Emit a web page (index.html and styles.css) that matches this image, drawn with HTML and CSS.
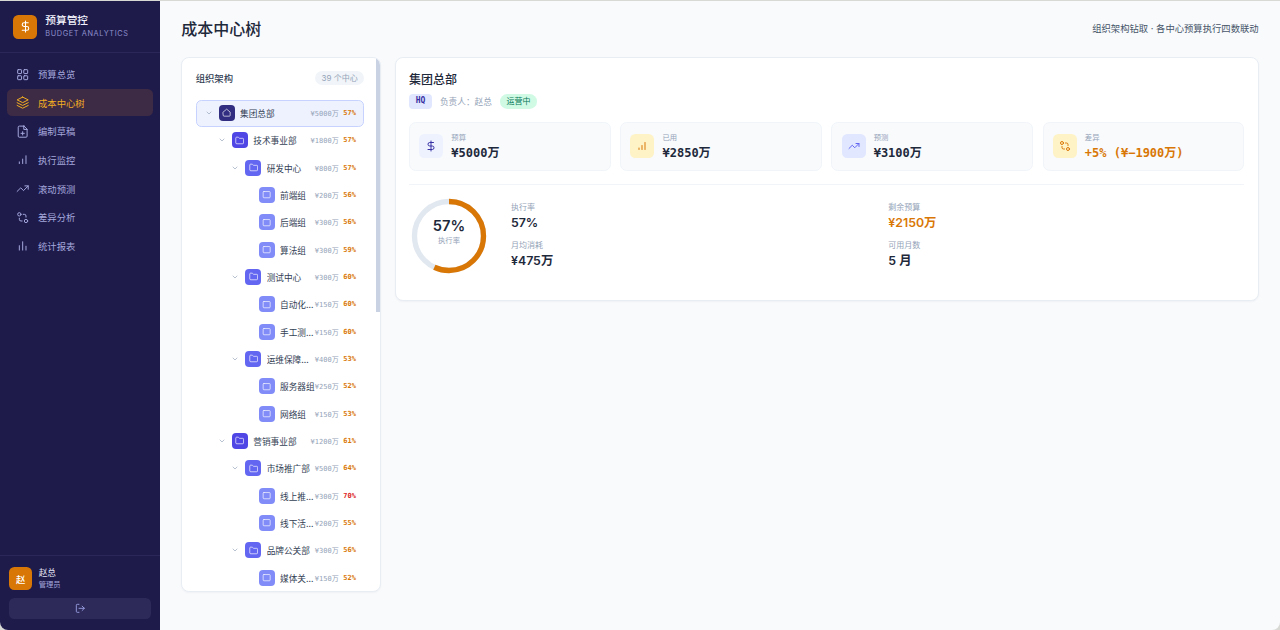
FILE: index.html
```html
<!DOCTYPE html>
<html lang="zh-CN">
<head>
  <meta charset="UTF-8">
  <title>预算管控 - 成本中心树</title>
  <link rel="stylesheet" href="styles.css">
</head>

<body>
  <svg class="icon-defs" aria-hidden="true">
    <symbol id="i-dollar" viewBox="0 0 24 24"><path d="M12 2v20M17 5H9.5a3.5 3.5 0 0 0 0 7h5a3.5 3.5 0 0 1 0 7H6"/></symbol>
    <symbol id="i-grid" viewBox="0 0 24 24"><rect x="3" y="3" width="7" height="7" rx="1"/><rect x="14" y="3" width="7" height="7" rx="1"/><rect x="14" y="14" width="7" height="7" rx="1"/><rect x="3" y="14" width="7" height="7" rx="1"/></symbol>
    <symbol id="i-layers" viewBox="0 0 24 24"><path d="M12 2 2 7l10 5 10-5-10-5z"/><path d="m2 17 10 5 10-5"/><path d="m2 12 10 5 10-5"/></symbol>
    <symbol id="i-file" viewBox="0 0 24 24"><path d="M14.5 2H6a2 2 0 0 0-2 2v16a2 2 0 0 0 2 2h12a2 2 0 0 0 2-2V7.5L14.5 2z"/><path d="M14 2v6h6M12 18v-6M9 15h6"/></symbol>
    <symbol id="i-signal" viewBox="0 0 24 24"><path d="M18 19V5M12 19v-8M6 19v-3"/></symbol>
    <symbol id="i-trend" viewBox="0 0 24 24"><path d="m22 7-8.500 8.500-5-5L2 17"/><path d="M16 7h6v6"/></symbol>
    <symbol id="i-compare" viewBox="0 0 24 24"><circle cx="18" cy="18" r="3"/><circle cx="6" cy="6" r="3"/><path d="M13 6h2a3 3 0 0 1 3 3v2M11 18H9a3 3 0 0 1-3-3v-2"/></symbol>
    <symbol id="i-bars" viewBox="0 0 24 24"><path d="M18 20v-7M12 20V5M6 20v-8"/></symbol>
    <symbol id="i-logout" viewBox="0 0 24 24"><path d="M9 21H5a2 2 0 0 1-2-2V5a2 2 0 0 1 2-2h4M16 17l5-5-5-5M21 12H9"/></symbol>
    <symbol id="i-chevron" viewBox="0 0 24 24"><path d="m6 9 6 6 6-6"/></symbol>
    <symbol id="i-home" viewBox="0 0 24 24"><path d="M3 10.500 12 3l9 7.500V19a2 2 0 0 1-2 2H5a2 2 0 0 1-2-2z"/></symbol>
    <symbol id="i-folder" viewBox="0 0 24 24"><path d="M20 20a2 2 0 0 0 2-2V8a2 2 0 0 0-2-2h-7.900a2 2 0 0 1-1.700-.9l-.8-1.200A2 2 0 0 0 7.900 3H4a2 2 0 0 0-2 2v13a2 2 0 0 0 2 2z"/></symbol>
    <symbol id="i-square" viewBox="0 0 24 24"><rect x="3" y="4" width="18" height="16" rx="2"/></symbol>
  </svg>

  <div class="app">
    <aside class="sidebar">
      <div class="brand">
        <div class="brand-logo"><svg class="ico"><use href="#i-dollar"/></svg></div>
        <div>
          <div class="brand-name">预算管控</div>
          <div class="brand-sub">BUDGET ANALYTICS</div>
        </div>
      </div>

      <nav class="nav">
        <a class="nav-item"><svg class="ico"><use href="#i-grid"/></svg>预算总览</a>
        <a class="nav-item active"><svg class="ico"><use href="#i-layers"/></svg>成本中心树</a>
        <a class="nav-item"><svg class="ico"><use href="#i-file"/></svg>编制草稿</a>
        <a class="nav-item"><svg class="ico"><use href="#i-signal"/></svg>执行监控</a>
        <a class="nav-item"><svg class="ico"><use href="#i-trend"/></svg>滚动预测</a>
        <a class="nav-item"><svg class="ico"><use href="#i-compare"/></svg>差异分析</a>
        <a class="nav-item"><svg class="ico"><use href="#i-bars"/></svg>统计报表</a>
      </nav>

      <div class="side-foot">
        <div class="user">
          <div class="avatar">赵</div>
          <div>
            <div class="user-name">赵总</div>
            <div class="user-role">管理员</div>
          </div>
        </div>
        <button class="logout"><svg class="ico"><use href="#i-logout"/></svg></button>
      </div>
    </aside>

    <main class="main">
      <header class="topbar">
        <h1>成本中心树</h1>
        <span class="topbar-note">组织架构钻取 · 各中心预算执行四数联动</span>
      </header>

      <div class="content">
        <section class="tree-panel">
          <div class="tree-thumb"></div>
          <div class="tree-head">
            <span class="tree-title">组织架构</span>
            <span class="tree-count">39 个中心</span>
          </div>

          <div class="row selected">
            <span class="toggle"><svg class="ico"><use href="#i-chevron"/></svg></span>
            <span class="node n0"><svg class="ico"><use href="#i-home"/></svg></span>
            <span class="name">集团总部</span><span class="amt">¥5000万</span><span class="pct">57%</span>
          </div>
          <div class="row lv1">
            <span class="toggle"><svg class="ico"><use href="#i-chevron"/></svg></span>
            <span class="node n1"><svg class="ico"><use href="#i-folder"/></svg></span>
            <span class="name">技术事业部</span><span class="amt">¥1800万</span><span class="pct">57%</span>
          </div>
          <div class="row lv2">
            <span class="toggle"><svg class="ico"><use href="#i-chevron"/></svg></span>
            <span class="node n2"><svg class="ico"><use href="#i-folder"/></svg></span>
            <span class="name">研发中心</span><span class="amt">¥800万</span><span class="pct">57%</span>
          </div>
          <div class="row lv3">
            <span class="toggle"></span>
            <span class="node n3"><svg class="ico"><use href="#i-square"/></svg></span>
            <span class="name">前端组</span><span class="amt">¥200万</span><span class="pct">56%</span>
          </div>
          <div class="row lv3">
            <span class="toggle"></span>
            <span class="node n3"><svg class="ico"><use href="#i-square"/></svg></span>
            <span class="name">后端组</span><span class="amt">¥300万</span><span class="pct">56%</span>
          </div>
          <div class="row lv3">
            <span class="toggle"></span>
            <span class="node n3"><svg class="ico"><use href="#i-square"/></svg></span>
            <span class="name">算法组</span><span class="amt">¥300万</span><span class="pct">59%</span>
          </div>
          <div class="row lv2">
            <span class="toggle"><svg class="ico"><use href="#i-chevron"/></svg></span>
            <span class="node n2"><svg class="ico"><use href="#i-folder"/></svg></span>
            <span class="name">测试中心</span><span class="amt">¥300万</span><span class="pct">60%</span>
          </div>
          <div class="row lv3">
            <span class="toggle"></span>
            <span class="node n3"><svg class="ico"><use href="#i-square"/></svg></span>
            <span class="name">自动化测试组</span><span class="amt">¥150万</span><span class="pct">60%</span>
          </div>
          <div class="row lv3">
            <span class="toggle"></span>
            <span class="node n3"><svg class="ico"><use href="#i-square"/></svg></span>
            <span class="name">手工测试组</span><span class="amt">¥150万</span><span class="pct">60%</span>
          </div>
          <div class="row lv2">
            <span class="toggle"><svg class="ico"><use href="#i-chevron"/></svg></span>
            <span class="node n2"><svg class="ico"><use href="#i-folder"/></svg></span>
            <span class="name">运维保障中心</span><span class="amt">¥400万</span><span class="pct">53%</span>
          </div>
          <div class="row lv3">
            <span class="toggle"></span>
            <span class="node n3"><svg class="ico"><use href="#i-square"/></svg></span>
            <span class="name">服务器组</span><span class="amt">¥250万</span><span class="pct">52%</span>
          </div>
          <div class="row lv3">
            <span class="toggle"></span>
            <span class="node n3"><svg class="ico"><use href="#i-square"/></svg></span>
            <span class="name">网络组</span><span class="amt">¥150万</span><span class="pct">53%</span>
          </div>
          <div class="row lv1">
            <span class="toggle"><svg class="ico"><use href="#i-chevron"/></svg></span>
            <span class="node n1"><svg class="ico"><use href="#i-folder"/></svg></span>
            <span class="name">营销事业部</span><span class="amt">¥1200万</span><span class="pct">61%</span>
          </div>
          <div class="row lv2">
            <span class="toggle"><svg class="ico"><use href="#i-chevron"/></svg></span>
            <span class="node n2"><svg class="ico"><use href="#i-folder"/></svg></span>
            <span class="name">市场推广部</span><span class="amt">¥500万</span><span class="pct">64%</span>
          </div>
          <div class="row lv3">
            <span class="toggle"></span>
            <span class="node n3"><svg class="ico"><use href="#i-square"/></svg></span>
            <span class="name">线上推广组</span><span class="amt">¥300万</span><span class="pct over">70%</span>
          </div>
          <div class="row lv3">
            <span class="toggle"></span>
            <span class="node n3"><svg class="ico"><use href="#i-square"/></svg></span>
            <span class="name">线下活动组</span><span class="amt">¥200万</span><span class="pct">55%</span>
          </div>
          <div class="row lv2">
            <span class="toggle"><svg class="ico"><use href="#i-chevron"/></svg></span>
            <span class="node n2"><svg class="ico"><use href="#i-folder"/></svg></span>
            <span class="name">品牌公关部</span><span class="amt">¥300万</span><span class="pct">56%</span>
          </div>
          <div class="row lv3">
            <span class="toggle"></span>
            <span class="node n3"><svg class="ico"><use href="#i-square"/></svg></span>
            <span class="name">媒体关系组</span><span class="amt">¥150万</span><span class="pct">52%</span>
          </div>
        </section>

        <section class="detail">
          <h2>集团总部</h2>
          <div class="meta">
            <span class="code">HQ</span>
            <span class="owner">负责人：赵总</span>
            <span class="status">运营中</span>
          </div>

          <div class="stats">
            <div class="stat">
              <div class="stat-icon s-indigo"><svg class="ico"><use href="#i-dollar"/></svg></div>
              <div>
                <div class="stat-label">预算</div>
                <div class="stat-value">¥5000万</div>
              </div>
            </div>
            <div class="stat">
              <div class="stat-icon s-amber"><svg class="ico"><use href="#i-signal"/></svg></div>
              <div>
                <div class="stat-label">已用</div>
                <div class="stat-value">¥2850万</div>
              </div>
            </div>
            <div class="stat">
              <div class="stat-icon s-violet"><svg class="ico"><use href="#i-trend"/></svg></div>
              <div>
                <div class="stat-label">预测</div>
                <div class="stat-value">¥3100万</div>
              </div>
            </div>
            <div class="stat">
              <div class="stat-icon s-amber"><svg class="ico"><use href="#i-compare"/></svg></div>
              <div>
                <div class="stat-label">差异</div>
                <div class="stat-value warn">+5% (¥−1900万)</div>
              </div>
            </div>
          </div>

          <div class="usage">
            <div class="donut">
              <svg viewBox="0 0 76 76">
                <circle class="donut-track" cx="38" cy="38" r="34.500"/>
                <circle class="donut-bar" cx="38" cy="38" r="34.500" pathLength="100" stroke-dasharray="57 100"/>
              </svg>
              <div class="donut-text">
                <div class="donut-num">57%</div>
                <div class="donut-label">执行率</div>
              </div>
            </div>
            <div class="facts">
              <div class="fact">
                <div class="fact-label">执行率</div>
                <div class="fact-value">57%</div>
              </div>
              <div class="fact">
                <div class="fact-label">剩余预算</div>
                <div class="fact-value warn">¥2150万</div>
              </div>
              <div class="fact">
                <div class="fact-label">月均消耗</div>
                <div class="fact-value">¥475万</div>
              </div>
              <div class="fact">
                <div class="fact-label">可用月数</div>
                <div class="fact-value">5 月</div>
              </div>
            </div>
          </div>
        </section>
      </div>
    </main>
  </div>
</body>
</html>
```

FILE: styles.css
```css
:root {
  --ink: #1e293b;
  --muted: #94a3b8;
  --line: #e8edf4;
  --side: #1e1b4b;
  --side-text: #a5a8dc;
  --orange: #d97706;
}

* {
  box-sizing: border-box;
}

html, body {
  height: 100%;
}

body {
  margin: 0;
  padding-top: 1px;
  overflow: hidden;
  background: #d8d8d4;
  color: var(--ink);
  font-family: Inter, "Noto Sans CJK SC", sans-serif;
}

.icon-defs {
  display: none;
}

.ico {
  display: block;
  fill: none;
  stroke: currentColor;
  stroke-width: 2;
  stroke-linecap: round;
  stroke-linejoin: round;
}

.app {
  display: flex;
  height: 629px;
  border-radius: 0 0 8px 8px;
  overflow: hidden;
  background: #f8fafc;
}

/* sidebar */
.sidebar {
  width: 160px;
  flex-shrink: 0;
  display: flex;
  flex-direction: column;
  background: var(--side);
}

.brand {
  height: 52px;
  padding: 0 13.33px;
  display: flex;
  align-items: center;
  gap: 8px;
  border-bottom: 1px solid #2b2859;
}

.brand-logo {
  width: 24px;
  height: 24px;
  border-radius: 5.33px;
  background: var(--orange);
  color: #fff;
  display: flex;
  align-items: center;
  justify-content: center;
}

.brand-logo .ico {
  width: 13px;
  height: 13px;
}

.brand-name {
  font-size: 10.67px;
  font-weight: 500;
  line-height: 14px;
  color: #f1f2fb;
}

.brand-sub {
  margin-top: 1px;
  font-size: 7.33px;
  line-height: 10px;
  letter-spacing: 0.6px;
  color: #8e90cc;
}

.nav {
  flex: 1;
  padding: 7.5px 6.67px;
  display: flex;
  flex-direction: column;
  gap: 1.33px;
}

.nav-item {
  height: 27.33px;
  padding: 0 10px 0 9.33px;
  display: flex;
  align-items: center;
  gap: 8.67px;
  border-radius: 5.33px;
  font-size: 9.33px;
  color: var(--side-text);
}

.nav-item .ico {
  width: 13.33px;
  height: 13.33px;
  stroke-width: 1.8;
}

.nav-item.active {
  background: #3d2a45;
  color: #f1ae22;
}

.side-foot {
  height: 75px;
  padding: 10.5px 9.33px 0;
  border-top: 1px solid #2b2859;
}

.user {
  display: flex;
  align-items: center;
  gap: 6.67px;
}

.avatar {
  width: 22.67px;
  height: 22.67px;
  border-radius: 5.33px;
  background: var(--orange);
  color: #fff;
  font-size: 9.33px;
  font-weight: 500;
  display: flex;
  align-items: center;
  justify-content: center;
}

.user-name {
  font-size: 8.67px;
  line-height: 12px;
  color: #e6e7f6;
}

.user-role {
  font-size: 7.33px;
  line-height: 12px;
  color: var(--side-text);
}

.logout {
  width: 142px;
  height: 21.33px;
  margin-top: 7.5px;
  padding: 0;
  border: none;
  border-radius: 5.33px;
  background: #2d2a5a;
  color: #9ea3e6;
  display: flex;
  align-items: center;
  justify-content: center;
}

.logout .ico {
  width: 10.67px;
  height: 10.67px;
}

/* main */
.main {
  flex: 1;
  min-width: 0;
  padding: 0 21.33px;
}

.topbar {
  height: 56px;
  padding-bottom: 2px;
  display: flex;
  align-items: center;
  justify-content: space-between;
}

.topbar h1 {
  margin: 0;
  font-size: 16px;
  font-weight: 500;
}

.topbar-note {
  font-size: 9.33px;
  color: #475569;
}

.content {
  display: flex;
  align-items: flex-start;
  gap: 13.33px;
}

/* tree */
.tree-panel {
  position: relative;
  width: 200px;
  height: 535px;
  flex-shrink: 0;
  padding-right: 16px;
  padding-left: 13.33px;
  overflow: hidden;
  background: #fff;
  border: 1px solid var(--line);
  border-radius: 8px;
  box-shadow: 0 1px 2px rgba(15, 23, 42, 0.04);
}

.tree-thumb {
  position: absolute;
  top: -1px;
  right: 0;
  width: 4px;
  height: 255px;
  background: #c8d2e3;
}

.tree-head {
  height: 41.5px;
  padding-bottom: 1.5px;
  display: flex;
  align-items: center;
  justify-content: space-between;
}

.tree-title {
  font-size: 9.33px;
  font-weight: 500;
  color: #334155;
}

.tree-count {
  height: 14.67px;
  padding: 0 6.67px;
  border-radius: 7.33px;
  background: #f1f5f9;
  color: var(--muted);
  font-size: 8px;
  line-height: 14.67px;
}

.row {
  height: 27.33px;
  padding: 0 7.33px 0 5.33px;
  display: flex;
  align-items: center;
  border: 1px solid transparent;
  border-radius: 5.33px;
}

.row.selected {
  background: #eef2ff;
  border-color: #c7d2fe;
}

.lv1 { padding-left: 18.67px; }
.lv2 { padding-left: 32px; }
.lv3 { padding-left: 45.33px; }

.toggle {
  width: 13.33px;
  flex-shrink: 0;
  color: var(--muted);
}

.toggle .ico {
  width: 8px;
  height: 8px;
  margin: 0 auto;
}

.node {
  width: 16px;
  height: 16px;
  margin-left: 3.33px;
  flex-shrink: 0;
  border-radius: 4px;
  color: rgba(255, 255, 255, 0.85);
  display: flex;
  align-items: center;
  justify-content: center;
}

.node .ico {
  width: 9.33px;
  height: 9.33px;
}

.n0 { background: #312e81; }
.n1 { background: #4f46e5; }
.n2 { background: #6366f1; }
.n3 { background: #818cf8; }

.name {
  flex: 1;
  min-width: 0;
  margin-left: 5.33px;
  font-size: 8.67px;
  color: #334155;
  white-space: nowrap;
  overflow: hidden;
  text-overflow: ellipsis;
}

.amt,
.pct,
.code,
.stat-value {
  font-family: "DejaVu Sans Mono", "Noto Sans CJK SC", monospace;
}

.amt {
  font-size: 7px;
  color: var(--muted);
  white-space: nowrap;
}

.pct {
  width: 17.33px;
  flex-shrink: 0;
  text-align: right;
  font-size: 7px;
  font-weight: 700;
  color: var(--orange);
}

.pct.over {
  color: #dc2626;
}

/* detail card */
.detail {
  flex: 1;
  min-width: 0;
  height: 243.5px;
  padding: 14.33px 13.33px 13.33px;
  background: #fff;
  border: 1px solid var(--line);
  border-radius: 8px;
  box-shadow: 0 1px 2px rgba(15, 23, 42, 0.04);
}

.detail h2 {
  margin: 0;
  font-size: 12px;
  font-weight: 500;
  line-height: 16px;
}

.meta {
  margin-top: 5.67px;
  display: flex;
  align-items: center;
  gap: 8px;
}

.code {
  height: 14.67px;
  padding: 0 6.67px;
  border-radius: 4px;
  background: #e0e7ff;
  color: #3730a3;
  font-size: 8px;
  font-weight: 700;
  line-height: 14.67px;
}

.owner {
  font-size: 8.67px;
  color: var(--muted);
}

.status {
  height: 14.67px;
  padding: 0 6.67px;
  border-radius: 7.33px;
  background: #d1fae5;
  color: #047857;
  font-size: 8px;
  line-height: 14.67px;
}

.stats {
  margin-top: 13.33px;
  display: grid;
  grid-template-columns: repeat(4, 1fr);
  gap: 9.33px;
}

.stat {
  height: 49px;
  padding: 0 9.33px;
  display: flex;
  align-items: center;
  gap: 8px;
  background: #f8fafc;
  border: 1px solid #f1f5f9;
  border-radius: 6.67px;
}

.stat-icon {
  width: 24px;
  height: 24px;
  flex-shrink: 0;
  border-radius: 5.33px;
  display: flex;
  align-items: center;
  justify-content: center;
}

.stat-icon .ico {
  width: 12px;
  height: 12px;
}

.s-indigo { background: #eef2ff; color: #3730a3; }
.s-amber { background: #fef3c7; color: var(--orange); }
.s-violet { background: #e0e7ff; color: #6366f1; }

.stat-label {
  font-size: 7.33px;
  line-height: 11px;
  color: var(--muted);
}

.stat-value {
  margin-top: 1.5px;
  font-size: 12px;
  font-weight: 700;
  line-height: 16px;
  white-space: nowrap;
}

.warn {
  color: var(--orange);
}

.usage {
  margin-top: 13.33px;
  padding-top: 12.33px;
  display: flex;
  gap: 24px;
  border-top: 1px solid #f1f5f9;
}

.donut {
  position: relative;
  width: 76px;
  height: 76px;
  flex-shrink: 0;
  margin-left: 2px;
}

.donut svg {
  display: block;
  width: 100%;
  height: 100%;
  transform: rotate(-90deg);
}

.donut circle {
  fill: none;
  stroke-width: 5.33;
}

.donut-track {
  stroke: #e2e8f0;
}

.donut-bar {
  stroke: var(--orange);
}

.donut-text {
  position: absolute;
  inset: 0 0 7px;
  display: flex;
  flex-direction: column;
  align-items: center;
  justify-content: center;
}

.donut-num {
  font-size: 14.67px;
  font-weight: 600;
  line-height: 17px;
}

.donut-label {
  font-size: 7.33px;
  line-height: 11px;
  color: var(--muted);
}

.facts {
  flex: 1;
  padding-top: 3.5px;
  display: grid;
  grid-template-columns: 1fr 1fr;
  column-gap: 21.33px;
  row-gap: 7px;
  align-content: start;
}

.fact-label {
  font-size: 8px;
  line-height: 12px;
  color: var(--muted);
}

.fact-value {
  margin-top: 1px;
  font-size: 12.33px;
  font-weight: 600;
  line-height: 18px;
}
```
